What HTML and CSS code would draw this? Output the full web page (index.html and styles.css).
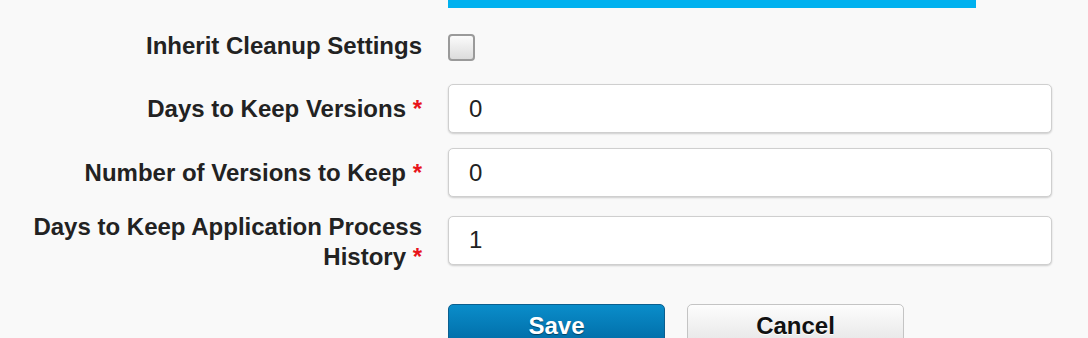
FILE: index.html
```html
<!DOCTYPE html>
<html>
<head>
<meta charset="utf-8">
<link rel="stylesheet" href="styles.css">
</head>
<body>
<form class="form">
  <div class="spacer"></div>
  <div class="bar"></div>

  <label class="label row-check" for="inherit">Inherit Cleanup Settings</label>
  <div class="control row-check"><input id="inherit" class="checkbox" type="checkbox"></div>

  <label class="label" for="days">Days to Keep Versions <span class="req">*</span></label>
  <div class="control"><input id="days" class="text" type="text" value="0"></div>

  <label class="label" for="num">Number of Versions to Keep <span class="req">*</span></label>
  <div class="control"><input id="num" class="text" type="text" value="0"></div>

  <label class="label" for="hist">Days to Keep Application Process History&nbsp;<span class="req">*</span></label>
  <div class="control control-tall"><input id="hist" class="text" type="text" value="1"></div>

  <div class="spacer"></div>
  <div class="buttons">
    <button type="button" class="btn btn-primary">Save</button>
    <button type="button" class="btn btn-default">Cancel</button>
  </div>
</form>
</body>
</html>
```

FILE: styles.css
```css
html, body {
  margin: 0;
  padding: 0;
  background: #f9f9f9;
  height: 100%;
  overflow: hidden;
}

body {
  font-family: "Liberation Sans", Arial, Helvetica, sans-serif;
  color: #222;
}

.form {
  display: grid;
  grid-template-columns: 395px 604px;
  column-gap: 26px;
  row-gap: 15px;
  padding-left: 27px;
  align-items: center;
}

.bar {
  height: 8px;
  width: 528px;
  background: #00b1ef;
}

.label {
  font-size: 24px;
  font-weight: bold;
  line-height: 30px;
  text-align: right;
  color: #222;
}

.req {
  color: #e8141b;
}

.row-check {
  height: 46px;
  display: flex;
  align-items: center;
  justify-content: flex-end;
}

.control.row-check {
  justify-content: flex-start;
}

.control-tall {
  margin-top: -4px;
}

.checkbox {
  -webkit-appearance: none;
  appearance: none;
  margin: 3px 0 0 0;
  width: 27px;
  height: 27px;
  box-sizing: border-box;
  border: 2px solid #9a9a9a;
  border-radius: 4px;
  background: linear-gradient(#fbfbfb, #dcdcdc);
}

.text {
  display: block;
  box-sizing: border-box;
  width: 604px;
  height: 49px;
  margin: 0;
  padding: 0 0 0 20px;
  border: 1px solid #cfcfcf;
  border-radius: 5px;
  background: #fff;
  box-shadow: 0 1px 2px rgba(0, 0, 0, 0.18);
  font-family: "Liberation Sans", Arial, Helvetica, sans-serif;
  font-size: 24px;
  color: #222;
  outline: none;
}

.buttons {
  display: flex;
  gap: 22px;
  margin-top: 17px;
}

.btn {
  box-sizing: border-box;
  width: 217px;
  height: 44px;
  margin: 0;
  padding: 0;
  border-radius: 5px;
  font-family: "Liberation Sans", Arial, Helvetica, sans-serif;
  font-size: 24px;
  font-weight: bold;
  line-height: 40px;
  cursor: pointer;
}

.btn-primary {
  color: #fff;
  border: 1px solid #0b5f8f;
  background: linear-gradient(#0a8dca, #0069a3);
  text-shadow: 0 1px 1px rgba(0, 0, 0, 0.45);
}

.btn-default {
  color: #111;
  border: 1px solid #c4c4c4;
  background: linear-gradient(#fdfdfd, #e4e4e4);
  text-shadow: 0 1px 0 #fff;
}
```
